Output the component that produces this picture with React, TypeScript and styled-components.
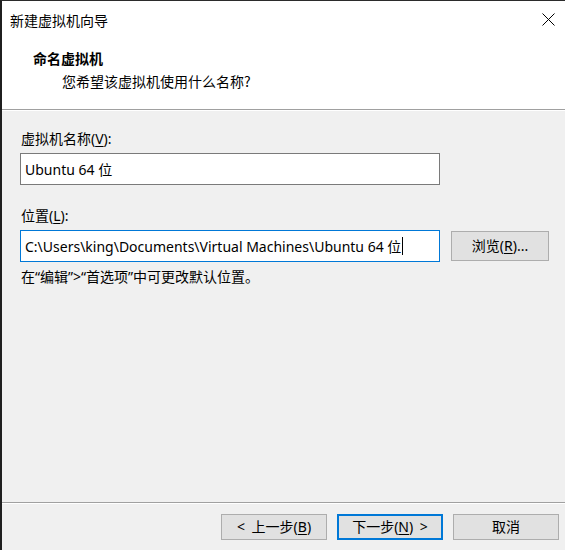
import React from 'react';
import styled, { createGlobalStyle } from 'styled-components';

const GlobalStyle = createGlobalStyle`
  html, body {
    margin: 0;
    padding: 0;
    background: #f0f0f0;
  }
  body {
    font-family: "Noto Sans", "Noto Sans CJK SC", sans-serif;
    font-size: 14px;
    color: #000;
  }
`;

const Window = styled.div`
  width: 565px;
  height: 550px;
  box-sizing: border-box;
  border-left: 2px solid #1f1f1f;
  border-top: 1px solid #2b2b2b;
  display: flex;
  flex-direction: column;
  background: #f0f0f0;
  overflow: hidden;
`;

const TitleBar = styled.div`
  height: 37px;
  display: flex;
  align-items: center;
  justify-content: space-between;
  background: #fff;
  padding: 0 10px 0 8px;
`;

const TitleText = styled.span`
  font-family: "Noto Sans CJK SC", sans-serif;
  font-size: 14px;
  line-height: 1;
`;

const CloseButton = styled.div`
  width: 14px;
  height: 14px;
  display: flex;
  align-items: center;
  justify-content: center;
`;

const Header = styled.div`
  background: #fff;
  height: 72px;
  box-sizing: border-box;
  padding: 11px 0 0 31px;
  border-bottom: 1px solid #a0a0a0;
  display: flex;
  flex-direction: column;
  gap: 5px;
`;

const Heading = styled.div`
  font-family: "Noto Sans CJK SC", sans-serif;
  font-weight: bold;
  font-size: 14px;
  line-height: 18px;
`;

const SubHeading = styled.div`
  font-family: "Noto Sans CJK SC", sans-serif;
  font-size: 14px;
  line-height: 18px;
  padding-left: 29px;
`;

const Body = styled.div`
  flex: 1;
  border-top: 1px solid #fff;
  padding: 19px 0 0 18px;
  display: flex;
  flex-direction: column;
`;

const Label = styled.div`
  line-height: 18px;
  margin-bottom: 5px;
  padding-left: 1px;
`;

const Row = styled.div`
  display: flex;
  align-items: center;
  gap: 11px;
`;

const Input = styled.div<{ $focused?: boolean }>`
  width: 420px;
  height: 32px;
  box-sizing: border-box;
  background: #fff;
  border: 1px solid ${(p) => (p.$focused ? '#0078d7' : '#7a7a7a')};
  display: flex;
  align-items: center;
  padding-left: 4px;
  white-space: nowrap;
`;

const Caret = styled.span`
  display: inline-block;
  width: 1px;
  height: 18px;
  background: #000;
  margin-left: 1px;
`;

const Field = styled.div<{ $gap: number }>`
  margin-bottom: ${(p) => p.$gap}px;
`;

const Button = styled.div<{ $default?: boolean }>`
  width: 106px;
  height: 26px;
  box-sizing: border-box;
  background: #e1e1e1;
  border: ${(p) => (p.$default ? '2px solid #0078d7' : '1px solid #adadad')};
  display: flex;
  align-items: center;
  justify-content: center;
  white-space: pre;
  word-spacing: 3px;
  line-height: 1;
`;

const BrowseButton = styled(Button)`
  width: 98px;
  height: 30px;
`;

const Note = styled.div`
  margin-top: 6px;
  padding-left: 1px;
  line-height: 18px;
`;

const Footer = styled.div`
  height: 48px;
  box-sizing: border-box;
  border-top: 1px solid #a0a0a0;
  box-shadow: inset 0 1px 0 #fff;
  display: flex;
  justify-content: flex-end;
  align-items: flex-start;
  padding: 11px 6px 0 0;
  gap: 10px;
`;

const Key = styled.span`
  text-decoration: underline;
  text-underline-offset: 2px;
`;

export default function App() {
  return (
    <>
      <GlobalStyle />
      <Window>
        <TitleBar>
          <TitleText>新建虚拟机向导</TitleText>
          <CloseButton>
            <svg width="13" height="13" viewBox="0 0 13 13">
              <path d="M0.5 0.5 L12.5 12.5 M12.5 0.5 L0.5 12.5" stroke="#000" strokeWidth="1" />
            </svg>
          </CloseButton>
        </TitleBar>
        <Header>
          <Heading>命名虚拟机</Heading>
          <SubHeading>您希望该虚拟机使用什么名称?</SubHeading>
        </Header>
        <Body>
          <Field $gap={22}>
            <Label>
              虚拟机名称(<Key>V</Key>):
            </Label>
            <Input>Ubuntu 64 位</Input>
          </Field>
          <Field $gap={0}>
            <Label>
              位置(<Key>L</Key>):
            </Label>
            <Row>
              <Input $focused>
                C:\Users\king\Documents\Virtual Machines\Ubuntu 64 位
                <Caret />
              </Input>
              <BrowseButton>
                浏览(<Key>R</Key>)...
              </BrowseButton>
            </Row>
          </Field>
          <Note>在“编辑”&gt;“首选项”中可更改默认位置。</Note>
        </Body>
        <Footer>
          <Button>
            {'< 上一步('}
            <Key>B</Key>)
          </Button>
          <Button $default>
            下一步(<Key>N</Key>
            {') >'}
          </Button>
          <Button>取消</Button>
        </Footer>
      </Window>
    </>
  );
}
